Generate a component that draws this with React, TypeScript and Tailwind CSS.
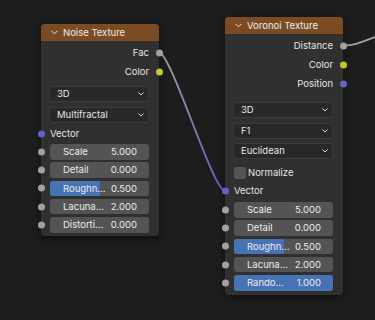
import React from "react";

type SocketKind = "float" | "color" | "vector";
const socketColor: Record<SocketKind, string> = {
  float: "bg-[#a1a1a1]",
  color: "bg-[#c7c729]",
  vector: "bg-[#6363c7]",
};

function Socket({ kind, side }: { kind: SocketKind; side: "left" | "right" }) {
  return (
    <span
      className={`absolute top-1/2 -translate-y-1/2 w-[7px] h-[7px] rounded-full ${socketColor[kind]} ${
        side === "left" ? "left-[-3.5px]" : "right-[-3.5px]"
      }`}
    />
  );
}

function Chevron() {
  return (
    <svg width="6" height="4" viewBox="0 0 6 4" className="shrink-0">
      <path d="M0.5 0.5 L3 3 L5.5 0.5" fill="none" stroke="#d6d6d6" strokeWidth="1" />
    </svg>
  );
}

function Header({ title }: { title: string }) {
  return (
    <div className="h-[17px] bg-[#7b4c23] rounded-t-[4px] flex items-center pl-[10px] text-[#ececec]">
      <svg width="7" height="5" viewBox="0 0 7 5" className="shrink-0">
        <path d="M0.5 0.8 L3.5 3.8 L6.5 0.8" fill="none" stroke="#e6e6e6" strokeWidth="1" />
      </svg>
      <span className="ml-[5px] leading-none">{title}</span>
    </div>
  );
}

function Output({ label, kind }: { label: string; kind: SocketKind }) {
  return (
    <div className="relative h-[19px] flex items-center justify-end pr-[10px] text-[#e4e4e4]">
      <span className="leading-none">{label}</span>
      <Socket kind={kind} side="right" />
    </div>
  );
}

function Dropdown({ label, mt }: { label: string; mt: string }) {
  return (
    <div className={`${mt} ml-[8px] mr-[10px] h-[16px] rounded-[3px] bg-[#282828] border border-[#3c3c3c] flex items-center justify-between pl-[7px] pr-[4px] text-[#e6e6e6]`}>
      <span className="leading-none">{label}</span>
      <Chevron />
    </div>
  );
}

function Field({ label, value, fill }: { label: string; value: string; fill: number }) {
  return (
    <div className="relative">
      <Socket kind="float" side="left" />
      <div className="ml-[9px] mr-[10px] h-[15.5px] rounded-[3px] bg-[#545454] relative overflow-hidden">
        {fill > 0 && (
          <div className="absolute left-0 top-0 bottom-0 bg-[#4772b3]" style={{ width: `${fill * 100}%` }} />
        )}
        <div className="relative h-full flex items-center justify-between pl-[13px] pr-[12px] text-[#ececec]">
          <span className="leading-none">{label}</span>
          <span className="leading-none">{value}</span>
        </div>
      </div>
    </div>
  );
}

function VectorInput({ mt }: { mt: string }) {
  return (
    <div className={`${mt} relative h-[18px] flex items-center pl-[9px] text-[#e4e4e4]`}>
      <Socket kind="vector" side="left" />
      <span className="leading-none">Vector</span>
    </div>
  );
}

export default function App() {
  return (
    <div
      className="relative w-[375px] h-[320px] overflow-hidden bg-[#1d1d1d] text-[9.5px]"
      style={{ fontFamily: "Inter, 'DejaVu Sans', sans-serif" }}
    >
      <svg className="absolute inset-0" width="375" height="320">
        <defs>
          <linearGradient id="wire" gradientUnits="userSpaceOnUse" x1="159" y1="52.5" x2="225" y2="191">
            <stop offset="0" stopColor="#a1a1a1" />
            <stop offset="1" stopColor="#6363c7" />
          </linearGradient>
        </defs>
        <path d="M159 52.5 C171 52.5, 213 191, 225 191" fill="none" stroke="url(#wire)" strokeWidth="1.8" />
        <path d="M343 45.5 C355 45.5, 362 42, 380 35" fill="none" stroke="#a1a1a1" strokeWidth="1.8" />
      </svg>

      {/* Noise Texture node */}
      <div className="absolute left-[41px] top-[24px] w-[118px] rounded-[4px] bg-[#303030] shadow-[0_2px_6px_rgba(0,0,0,0.55)] pb-[3px]">
        <Header title="Noise Texture" />
        <div className="pt-[2px]">
          <Output label="Fac" kind="float" />
          <Output label="Color" kind="color" />
        </div>
        <Dropdown label="3D" mt="mt-[5px]" />
        <Dropdown label="Multifractal" mt="mt-[5px]" />
        <VectorInput mt="mt-[2px]" />
        <div className="mt-[1px] flex flex-col gap-[2.75px]">
          <Field label="Scale" value="5.000" fill={0} />
          <Field label="Detail" value="0.000" fill={0} />
          <Field label="Roughn..." value="0.500" fill={0.5} />
          <Field label="Lacuna..." value="2.000" fill={0} />
          <Field label="Distorti..." value="0.000" fill={0} />
        </div>
      </div>

      {/* Voronoi Texture node */}
      <div className="absolute left-[225px] top-[17px] w-[118px] rounded-[4px] bg-[#303030] shadow-[0_2px_6px_rgba(0,0,0,0.55)] pb-[4.5px]">
        <Header title="Voronoi Texture" />
        <div className="pt-[2px]">
          <Output label="Distance" kind="float" />
          <Output label="Color" kind="color" />
          <Output label="Position" kind="vector" />
        </div>
        <Dropdown label="3D" mt="mt-[9px]" />
        <Dropdown label="F1" mt="mt-[4.5px]" />
        <Dropdown label="Euclidean" mt="mt-[4.5px]" />
        <div className="mt-[5px] h-[18px] flex items-center pl-[9px] text-[#e4e4e4]">
          <span className="w-[12px] h-[12px] rounded-[2px] bg-[#545454] shrink-0" />
          <span className="ml-[2px] leading-none">Normalize</span>
        </div>
        <VectorInput mt="mt-0" />
        <div className="mt-[2px] flex flex-col gap-[2.75px]">
          <Field label="Scale" value="5.000" fill={0} />
          <Field label="Detail" value="0.000" fill={0} />
          <Field label="Roughn..." value="0.500" fill={0.5} />
          <Field label="Lacuna..." value="2.000" fill={0} />
          <Field label="Rando..." value="1.000" fill={1} />
        </div>
      </div>
    </div>
  );
}
